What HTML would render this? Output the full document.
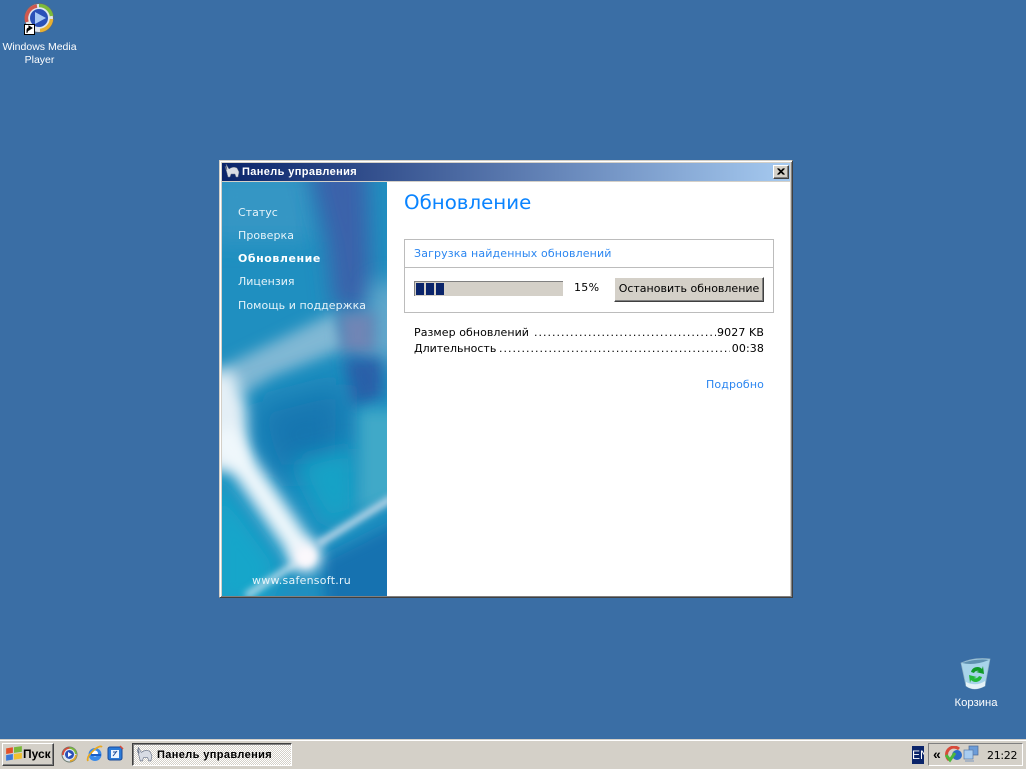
<!DOCTYPE html>
<html><head><meta charset="utf-8"><style>
html,body{margin:0;padding:0;width:1026px;height:769px;overflow:hidden;background:#3a6ea5}
body{font-family:"DejaVu Sans","Liberation Sans",sans-serif;font-size:11px;position:relative}
.a{position:absolute;white-space:nowrap;line-height:14px}
.bt{box-sizing:border-box;background:#d4d0c8;border:1px solid;border-color:#fff #404040 #404040 #fff;box-shadow:inset -1px -1px 0 #808080}
.b{color:#0a84ff}
.n{color:#e6f4fa}
</style></head><body>
<div class="a" style="left:0;top:0;width:1026px;height:769px;background:#3a6ea5"></div>

<!-- WMP icon -->
<svg class="a" style="left:22px;top:2px" width="36" height="36" viewBox="0 0 36 36">
<circle cx="17" cy="16" r="14.500" fill="#dfe6ee" stroke="#5a6a80" stroke-width="1"/>
<path d="M15 4A12.500 12.500 0 0 0 5 20" fill="none" stroke="#d0584e" stroke-width="3.500"/>
<path d="M17 3.500A12.500 12.500 0 0 1 29.500 14" fill="none" stroke="#7cbb3a" stroke-width="3.500"/>
<path d="M29.500 17A12.500 12.500 0 0 1 18 28.500" fill="none" stroke="#e8b030" stroke-width="3.500"/>
<circle cx="17" cy="16" r="9" fill="#2a50b8"/>
<path d="M13 10L24 16L13 22Z" fill="#a8c8f4"/>
</svg>
<svg class="a" style="left:24px;top:24px" width="11" height="11" viewBox="0 0 11 11"><rect width="11" height="11" fill="#fff"/><rect x=".5" y=".5" width="10" height="10" fill="none" stroke="#000"/><path d="M3 9V6Q3 4 6 4M5 2L8 4L5 6Z" fill="#000" stroke="#000"/></svg>
<div class="a" style="left:0;top:40px;width:79px;text-align:center;color:#fff;font-family:'Liberation Sans',sans-serif;font-size:10.500px;line-height:13px;padding-top:.5px">Windows Media<br>Player</div>

<!-- Recycle bin -->
<svg class="a" style="left:958px;top:657px" width="34" height="34" viewBox="0 0 34 34">
<path d="M3 6Q16 0 32 2L27 29Q16 35 8 29Z" fill="#a8d4ea" stroke="#8fb0c4" stroke-width=".7"/>
<path d="M4 6Q16 9 31 3Q20 1 4 6Z" fill="#5f90b0"/>
<path d="M8 25Q18 30 27 24L27 29Q16 35 8 29Z" fill="#e4f2f8"/>
<path d="M13 15A6.500 6.500 0 0 1 24 12L25 9L26 17L18 15L21 14A4 4 0 0 0 16 16Z" fill="#109a28"/>
<path d="M24 20A6.500 6.500 0 0 1 13 23L12 26L11 18L19 20L16 21A4 4 0 0 0 21 19Z" fill="#22b83a"/>
</svg>
<div class="a" style="left:950px;top:696px;width:52px;text-align:center;color:#fff;font-family:'Liberation Sans',sans-serif;font-size:11.300px">Корзина</div>

<!-- Window -->
<div class="a" style="left:219px;top:160px;width:574px;height:438px;box-sizing:border-box;background:#d4d0c8;border:1px solid;border-color:#d4d0c8 #404040 #404040 #d4d0c8;box-shadow:inset 1px 1px 0 #fff,inset -1px -1px 0 #808080"></div>
<div class="a" style="left:222px;top:163px;width:568px;height:18px;background:linear-gradient(90deg,#0a246a,#a6caf0)"></div>
<svg class="a" style="left:224px;top:163px" width="16" height="16" viewBox="0 0 16 16"><path d="M1 3L3 7L2 1L5 6Q9 3 13 5L15 9L14 14H12L11 11H7L6 14H4L3 10Z" fill="#d8dce4" stroke="#6a7488" stroke-width=".5"/></svg>
<div class="a" style="left:242px;top:165px;color:#fff;font-family:'Liberation Sans',sans-serif;font-weight:bold;font-size:11px;letter-spacing:.38px">Панель управления</div>
<div class="a bt" style="left:773px;top:165px;width:16px;height:14px"></div>
<svg class="a" style="left:773px;top:165px" width="16" height="14" viewBox="0 0 16 14"><path d="M4.500 3.500L10.500 9.500M5.500 3.500L11.500 9.500M10.500 3.500L4.500 9.500M11.500 3.500L5.500 9.500" stroke="#000" stroke-width="1" fill="none"/></svg>
<div class="a" style="left:222px;top:182px;width:568px;height:414px;background:#fff"></div>

<!-- Left panel art -->
<svg class="a" style="left:222px;top:182px" width="165" height="414" viewBox="0 0 165 414">
<defs>
<filter id="f3" x="-50%" y="-50%" width="200%" height="200%"><feGaussianBlur stdDeviation="3.500"/></filter>
<filter id="f5" x="-50%" y="-50%" width="200%" height="200%"><feGaussianBlur stdDeviation="7"/></filter>
<filter id="f9" x="-50%" y="-50%" width="200%" height="200%"><feGaussianBlur stdDeviation="11"/></filter>
<filter id="f14" x="-50%" y="-50%" width="200%" height="200%"><feGaussianBlur stdDeviation="16"/></filter>
<clipPath id="c"><rect width="165" height="414"/></clipPath>
</defs>
<g clip-path="url(#c)">
<rect width="165" height="414" fill="#1f8fc0"/>
<rect x="-10" y="-10" width="100" height="70" fill="#3596c4" filter="url(#f9)"/>
<path d="M85 -20H145L150 130L112 125L105 60Z" fill="#3a62aa" filter="url(#f9)"/>
<path d="M150 100H185V180H140Z" fill="#62a8cc" filter="url(#f9)"/>
<path d="M-10 190L113 130L125 165L50 195L20 215Z" fill="#80b8d4" filter="url(#f5)"/>
<path d="M116 130H153V172H120Z" fill="#7085b5" filter="url(#f5)"/>
<path d="M122 176H160V215L130 225Z" fill="#2c5fa8" filter="url(#f5)"/>
<path d="M30 225L125 200L123 290L50 295Z" fill="#1576b0" filter="url(#f14)"/>
<path d="M72 280L133 265L135 330L105 345Z" fill="#12a2c6" filter="url(#f9)"/>
<path d="M137 228H185V312L137 330Z" fill="#3fa9c8" filter="url(#f5)"/>
<path d="M-10 290L60 385L40 425H-10Z" fill="#12a6ca" filter="url(#f9)"/>
<path d="M100 378L185 335V435H105Z" fill="#1672b0" filter="url(#f5)"/>
<path d="M-15 190H12L24 225L26 285L-15 290Z" fill="#e4eff6" filter="url(#f5)"/>
<path d="M-2 250L84 375" stroke="#f0f8fc" stroke-width="26" fill="none" filter="url(#f5)"/>
<path d="M96 362L170 316" stroke="#bcd6e8" stroke-width="7" fill="none" filter="url(#f3)"/>
<path d="M76 380L24 414" stroke="#a8d4e6" stroke-width="7" fill="none" filter="url(#f3)"/>
<circle cx="84" cy="375" r="15" fill="#fbf8fc" filter="url(#f5)"/>
<circle cx="84" cy="375" r="9" fill="#fbf8fc" filter="url(#f3)"/>
</g>
</svg>
<div class="a n" style="left:238px;top:206px">Статус</div>
<div class="a n" style="left:238px;top:229px;letter-spacing:.05px">Проверка</div>
<div class="a" style="left:238px;top:252px;color:#fff;font-weight:bold;letter-spacing:.55px">Обновление</div>
<div class="a n" style="left:238px;top:275px">Лицензия</div>
<div class="a n" style="left:238px;top:299px;letter-spacing:.05px">Помощь и поддержка</div>
<div class="a n" style="left:252px;top:574px;letter-spacing:.25px">www.safensoft.ru</div>

<!-- Right side -->
<div class="a b" style="left:404px;top:191px;font-size:19.800px;line-height:24px">Обновление</div>
<div class="a" style="left:404px;top:239px;width:370px;height:74px;box-sizing:border-box;border:1px solid #bcbcbc"></div>
<div class="a" style="left:405px;top:267px;width:368px;height:1px;background:#bcbcbc"></div>
<div class="a b" style="left:414px;top:247px;color:#2b86f0;letter-spacing:.14px">Загрузка найденных обновлений</div>
<div class="a" style="left:414px;top:281px;width:149px;height:15px;background:#d4d0c8;box-shadow:inset 1px 1px 0 #808080"></div>
<div class="a" style="left:416px;top:283px;width:8px;height:12px;background:#0a246a"></div>
<div class="a" style="left:426px;top:283px;width:8px;height:12px;background:#0a246a"></div>
<div class="a" style="left:436px;top:283px;width:8px;height:12px;background:#0a246a"></div>
<div class="a" style="left:574px;top:281px;color:#000;letter-spacing:.3px">15%</div>
<div class="a bt" style="left:614px;top:277px;width:150px;height:25px"></div>
<div class="a" style="left:614px;top:282px;width:150px;text-align:center;color:#000">Остановить обновление</div>
<div class="a" style="left:414px;top:326px;color:#000;letter-spacing:.06px">Размер обновлений</div>
<div class="a" style="left:534px;top:326px;width:182px;overflow:hidden;color:#000;letter-spacing:1px">....................................................</div>
<div class="a" style="left:664px;top:326px;width:100px;text-align:right;color:#000;letter-spacing:.1px">9027 KB</div>
<div class="a" style="left:414px;top:342px;color:#000">Длительность</div>
<div class="a" style="left:499px;top:342px;width:231px;overflow:hidden;color:#000;letter-spacing:1px">..................................................................</div>
<div class="a" style="left:664px;top:342px;width:100px;text-align:right;color:#000;letter-spacing:.1px">00:38</div>
<div class="a b" style="left:664px;top:378px;width:100px;text-align:right;color:#2b86f0;letter-spacing:.12px">Подробно</div>

<!-- Taskbar -->
<div class="a" style="left:0;top:739px;width:1026px;height:30px;background:#d4d0c8;box-shadow:inset 0 1px 0 #d4d0c8,inset 0 2px 0 #fff"></div>
<div class="a bt" style="left:2px;top:743px;width:52px;height:23px"></div>
<svg class="a" style="left:5px;top:745px" width="18" height="18" viewBox="0 0 16 16"><path d="M1 3L7 2V7L1 8Z" fill="#e2502a"/><path d="M8 2L15 1V6L8 7Z" fill="#7cb83a"/><path d="M1 9L7 8V13L1 14Z" fill="#3a78d8"/><path d="M8 8L15 7V12L8 13Z" fill="#f0c030"/></svg>
<div class="a" style="left:23px;top:747px;font-family:'Liberation Sans',sans-serif;font-weight:bold;font-size:12px;color:#000">Пуск</div>
<svg class="a" style="left:61px;top:746px" width="17" height="17" viewBox="0 0 17 17"><circle cx="8.500" cy="8.500" r="7.500" fill="#dfe6ee" stroke="#6a7a70"/><path d="M8.500 2A6.500 6.500 0 0 0 2 9" fill="none" stroke="#d84a3a" stroke-width="1.800"/><path d="M8.500 2A6.500 6.500 0 0 1 15 8" fill="none" stroke="#7cbb3a" stroke-width="1.800"/><path d="M15 9A6.500 6.500 0 0 1 9 15" fill="none" stroke="#e0a830" stroke-width="1.800"/><circle cx="8.500" cy="8.500" r="4.500" fill="#2a50b8"/><path d="M7 6L11 8.500L7 11Z" fill="#fff"/></svg>
<svg class="a" style="left:86px;top:745px" width="18" height="18" viewBox="0 0 18 18"><circle cx="9" cy="9.500" r="6.500" fill="#3a8ae8"/><circle cx="9" cy="8.500" r="3" fill="#fff"/><path d="M5 10H15" stroke="#1a60c8" stroke-width="2"/><path d="M2 16Q0 12 8 5Q14 0 16 2" fill="none" stroke="#e8a820" stroke-width="1.800"/></svg>
<svg class="a" style="left:107px;top:745px" width="17" height="17" viewBox="0 0 17 17"><rect x="1" y="2" width="14" height="13" rx="2" fill="#2a7ad8" stroke="#1a4a98"/><rect x="4" y="5" width="8" height="8" fill="#eaf4ff"/><path d="M6 11L10 6M6 7H9" stroke="#1a4a98"/><path d="M13 1L16 4" stroke="#d84a3a" stroke-width="1.500"/></svg>
<div class="a" style="left:132px;top:743px;width:160px;height:23px;box-sizing:border-box;border:1px solid;border-color:#404040 #fff #fff #404040;box-shadow:inset 1px 1px 0 #808080;background-color:#ece9e2;background-image:repeating-conic-gradient(#fff 0 25%,#d4d0c8 0 50%);background-size:2px 2px"></div>
<svg class="a" style="left:136px;top:746px" width="17" height="17" viewBox="0 0 16 16"><path d="M1 3L3 7L2 1L5 6Q9 3 13 5L15 9L14 14H12L11 11H7L6 14H4L3 10Z" fill="#d8dce4" stroke="#6a7488" stroke-width=".6"/></svg>
<div class="a" style="left:157px;top:748px;font-family:'Liberation Sans',sans-serif;font-weight:bold;font-size:11px;color:#000;letter-spacing:.38px">Панель управления</div>
<div class="a" style="left:912px;top:746px;width:12px;height:18px;background:#0a246a;color:#fff;font-family:'Liberation Sans',sans-serif;font-size:12px;line-height:18px;overflow:hidden">EN</div>
<div class="a" style="left:928px;top:743px;width:95px;height:23px;box-sizing:border-box;border:1px solid;border-color:#808080 #fff #fff #808080"></div>
<div class="a" style="left:933px;top:747px;font-family:'Liberation Sans',sans-serif;font-weight:bold;font-size:14px;color:#000">«</div>
<svg class="a" style="left:945px;top:746px" width="18" height="17" viewBox="0 0 18 17"><path d="M4 14A7 7 0 0 1 14 3" fill="none" stroke="#d84a3a" stroke-width="3"/><circle cx="12" cy="9" r="5" fill="#2a6ac8"/><path d="M1 9L5 14L10 7" fill="none" stroke="#4cb83a" stroke-width="3"/></svg>
<svg class="a" style="left:963px;top:745px" width="16" height="18" viewBox="0 0 16 18"><rect x="6" y="1" width="9" height="9" fill="#6c9cd8" stroke="#4a6a98" stroke-width=".7"/><rect x="1" y="5" width="9" height="9" fill="#a8ccf0" stroke="#5a7aa8" stroke-width=".7"/><rect x="2" y="15" width="9" height="2" fill="#a8b4c4"/></svg>
<div class="a" style="left:987px;top:749px;color:#000;letter-spacing:-.3px">21:22</div>
</body></html>
